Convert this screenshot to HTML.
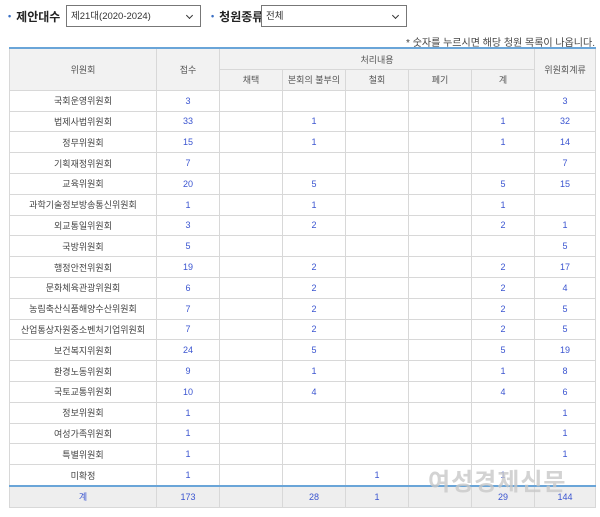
<!DOCTYPE html>
<html><head><meta charset="utf-8"><style>
body{margin:0;width:600px;height:517px;background:#fff;font-family:"Liberation Sans","Noto Sans CJK KR",sans-serif;position:relative;overflow:hidden;color:#444}
.lab{position:absolute;top:8px;font-size:12px;font-weight:bold;color:#222}
.lab:before{content:"•";color:#3a6fc4;font-size:9px;margin-right:5px;position:relative;top:-2px}
.sel{position:absolute;top:5px;height:22px;border:1px solid #777;background:#fff;font-size:9.5px;line-height:22px;padding-left:4px;box-sizing:border-box;color:#333}
.sel:after{content:"";position:absolute;right:8px;top:7px;width:4px;height:4px;border-right:1.3px solid #333;border-bottom:1.3px solid #333;transform:rotate(45deg)}
.note{position:absolute;right:5px;top:34px;font-size:10px;color:#444}
table{position:absolute;left:9px;top:47px;width:586px;border-collapse:collapse;table-layout:fixed;font-size:9px}
td,th{border:1px solid #d8d8d8;text-align:center;font-weight:normal;padding:0;height:19.8px;color:#444}
th{background:#f2f2f2;color:#555}
thead tr:first-child th{border-top:2px solid #6aa5d8;height:20px}
td.n{color:#3b55d0}
tr.tot td{background:#eee;border-top:2px solid #6aa5d8;color:#3b55d0;height:20px}
.wm{position:absolute;left:428px;top:462px;font-size:24px;font-weight:bold;color:rgba(200,200,200,.8);letter-spacing:1px}
</style></head><body>
<div class="lab" style="left:8px">제안대수</div>
<div class="sel" style="left:66px;width:135px">제21대(2020-2024)</div>
<div class="lab" style="left:211px">청원종류</div>
<div class="sel" style="left:261px;width:146px">전체</div>
<div class="note">* 숫자를 누르시면 해당 청원 목록이 나옵니다.</div>
<table>
<colgroup><col style="width:147px"><col style="width:63px"><col style="width:63px"><col style="width:63px"><col style="width:63px"><col style="width:63px"><col style="width:63px"><col style="width:61px"></colgroup>
<thead>
<tr><th rowspan="2">위원회</th><th rowspan="2">접수</th><th colspan="5">처리내용</th><th rowspan="2">위원회계류</th></tr>
<tr><th>채택</th><th>본회의 불부의</th><th>철회</th><th>폐기</th><th>계</th></tr>
</thead>
<tbody>
<tr><td>국회운영위원회</td><td class="n">3</td><td></td><td></td><td></td><td></td><td></td><td class="n">3</td></tr>
<tr><td>법제사법위원회</td><td class="n">33</td><td></td><td class="n">1</td><td></td><td></td><td class="n">1</td><td class="n">32</td></tr>
<tr><td>정무위원회</td><td class="n">15</td><td></td><td class="n">1</td><td></td><td></td><td class="n">1</td><td class="n">14</td></tr>
<tr><td>기획재정위원회</td><td class="n">7</td><td></td><td></td><td></td><td></td><td></td><td class="n">7</td></tr>
<tr><td>교육위원회</td><td class="n">20</td><td></td><td class="n">5</td><td></td><td></td><td class="n">5</td><td class="n">15</td></tr>
<tr><td>과학기술정보방송통신위원회</td><td class="n">1</td><td></td><td class="n">1</td><td></td><td></td><td class="n">1</td><td></td></tr>
<tr><td>외교통일위원회</td><td class="n">3</td><td></td><td class="n">2</td><td></td><td></td><td class="n">2</td><td class="n">1</td></tr>
<tr><td>국방위원회</td><td class="n">5</td><td></td><td></td><td></td><td></td><td></td><td class="n">5</td></tr>
<tr><td>행정안전위원회</td><td class="n">19</td><td></td><td class="n">2</td><td></td><td></td><td class="n">2</td><td class="n">17</td></tr>
<tr><td>문화체육관광위원회</td><td class="n">6</td><td></td><td class="n">2</td><td></td><td></td><td class="n">2</td><td class="n">4</td></tr>
<tr><td>농림축산식품해양수산위원회</td><td class="n">7</td><td></td><td class="n">2</td><td></td><td></td><td class="n">2</td><td class="n">5</td></tr>
<tr><td>산업통상자원중소벤처기업위원회</td><td class="n">7</td><td></td><td class="n">2</td><td></td><td></td><td class="n">2</td><td class="n">5</td></tr>
<tr><td>보건복지위원회</td><td class="n">24</td><td></td><td class="n">5</td><td></td><td></td><td class="n">5</td><td class="n">19</td></tr>
<tr><td>환경노동위원회</td><td class="n">9</td><td></td><td class="n">1</td><td></td><td></td><td class="n">1</td><td class="n">8</td></tr>
<tr><td>국토교통위원회</td><td class="n">10</td><td></td><td class="n">4</td><td></td><td></td><td class="n">4</td><td class="n">6</td></tr>
<tr><td>정보위원회</td><td class="n">1</td><td></td><td></td><td></td><td></td><td></td><td class="n">1</td></tr>
<tr><td>여성가족위원회</td><td class="n">1</td><td></td><td></td><td></td><td></td><td></td><td class="n">1</td></tr>
<tr><td>특별위원회</td><td class="n">1</td><td></td><td></td><td></td><td></td><td></td><td class="n">1</td></tr>
<tr><td>미확정</td><td class="n">1</td><td></td><td></td><td class="n">1</td><td></td><td class="n">1</td><td></td></tr>
<tr class="tot"><td>계</td><td>173</td><td></td><td>28</td><td>1</td><td></td><td>29</td><td>144</td></tr>
</tbody></table>
<div class="wm">여성경제신문</div>
</body></html>
